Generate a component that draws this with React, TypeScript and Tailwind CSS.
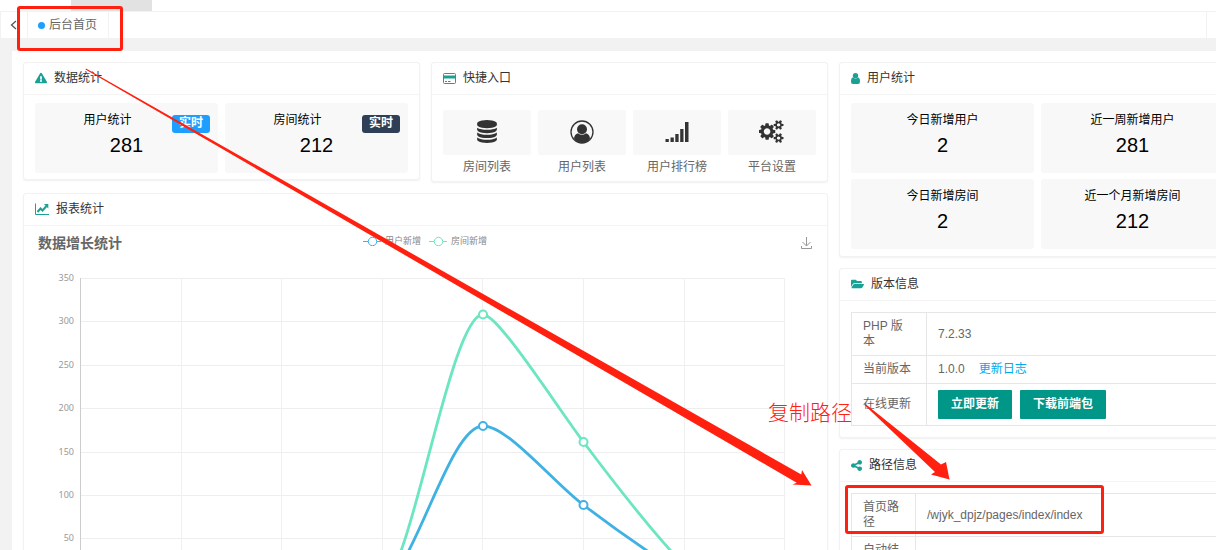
import React from 'react';
import { FaExclamationTriangle, FaFolderOpen } from 'react-icons/fa';

const RED = '#ff2010';

function LineChartIcon() {
  return (
    <svg className="w-[14px] h-3" viewBox="0 0 14 12" fill="none" stroke="currentColor">
      <path d="M0.5 0.500V11.500H14" />
      <path d="M2.500 9L5.500 5.500L7.500 7.500L11.500 3" strokeWidth="2" />
      <path d="M9 1H13.300V5.500Z" fill="currentColor" stroke="none" />
    </svg>
  );
}

function CardIcon() {
  return (
    <svg className="w-[13px] h-[11px]" viewBox="0 0 13 11" fill="none" stroke="currentColor">
      <rect x="0.500" y="0.500" width="12" height="10" rx="1" />
      <path d="M0.500 4H12.500" strokeWidth="3" />
      <path d="M2 8.500H4M5 8.500H7.500" />
    </svg>
  );
}

function UserIcon() {
  return (
    <svg className="w-[9px] h-[11px]" viewBox="0 0 9 11" fill="currentColor">
      <circle cx="4.500" cy="2.700" r="2.700" />
      <path d="M2 4.500Q4.500 6.800 7 4.500Q9 4.800 9 8.500Q9 11 7 11H2Q0 11 0 8.500Q0 4.800 2 4.500Z" />
    </svg>
  );
}

function ShareIcon() {
  return (
    <svg className="w-[11px] h-[11px]" viewBox="128 128 1536 1536" fill="currentColor">
      <path d="M1344 1024q133 0 226.500 93.500t93.500 226.500-93.500 226.500-226.500 93.500-226.500-93.500-93.500-226.500q0-12 2-34l-360-180q-92 86-218 86-133 0-226.500-93.500t-93.500-226.500 93.500-226.500 226.500-93.500q126 0 218 86l360-180q-2-22-2-34 0-133 93.500-226.500t226.500-93.500 226.500 93.500 93.500 226.500-93.500 226.500-226.500 93.500q-126 0-218-86l-360 180q2 22 2 34t-2 34l360 180q92-86 218-86z" />
    </svg>
  );
}

function DatabaseIcon() {
  return (
    <svg className="w-6 h-[23px]" viewBox="0 0 1792 1792" fill="currentColor">
      <path d="M896 768q237 0 443-43t325-127v170q0 69-103 128t-280 93.500-385 34.500-385-34.500-280-93.500-103-128v-170q119 84 325 127t443 43zm0 768q237 0 443-43t325-127v170q0 69-103 128t-280 93.500-385 34.500-385-34.500-280-93.500-103-128v-170q119 84 325 127t443 43zm0-384q237 0 443-43t325-127v170q0 69-103 128t-280 93.500-385 34.500-385-34.500-280-93.500-103-128v-170q119 84 325 127t443 43zm0-1152q208 0 385 34.500t280 93.500 103 128v128q0 69-103 128t-280 93.500-385 34.500-385-34.500-280-93.500-103-128v-128q0-69 103-128t280-93.500 385-34.500z" />
    </svg>
  );
}

function UserCircleIcon() {
  return (
    <svg className="w-6 h-6" viewBox="0 0 24 24" fill="currentColor">
      <circle cx="12" cy="12" r="11" fill="none" stroke="currentColor" strokeWidth="1.300" />
      <circle cx="12" cy="9.300" r="5" />
      <path d="M4 18.500Q4.500 14.200 8 13.300Q12 16.300 16 13.300Q19.500 14.200 20 18.500Q16.800 23 12 23T4 18.500Z" />
    </svg>
  );
}

function SignalIcon() {
  return (
    <svg className="w-6 h-6" viewBox="0 0 24 24" fill="currentColor">
      <rect x="0.500" y="19" width="3.300" height="3" />
      <rect x="5.500" y="17.500" width="3.300" height="4.500" />
      <rect x="10.300" y="14" width="3.300" height="8" />
      <rect x="15.200" y="9" width="3.300" height="13" />
      <rect x="20" y="2" width="3.500" height="20" />
    </svg>
  );
}

function CogsIcon() {
  return (
    <svg className="w-[26px] h-[23px]" viewBox="0 0 1920 1792" fill="currentColor">
      <path d="M832 896q0-106-75-181t-181-75-181 75-75 181 75 181 181 75 181-75 75-181zm768 512q0-52-38-90t-90-38-90 38-38 90q0 53 37.500 90.500t90.500 37.500 90.500-37.500 37.500-90.500zm0-1024q0-52-38-90t-90-38-90 38-38 90q0 53 37.500 90.500t90.500 37.500 90.500-37.500 37.500-90.500zm-384 421v185q0 10-7 19.500t-16 10.500l-155 24q-11 35-32 76 34 48 90 115 7 11 7 20 0 12-7 19-23 30-82.500 89.500t-78.500 59.500q-11 0-21-7l-115-90q-37 19-77 31-11 108-23 155-7 24-30 24h-186q-11 0-20-7.500t-10-17.500l-23-153q-34-10-75-31l-118 89q-7 7-20 7-11 0-21-8-144-133-144-160 0-9 7-19 10-14 41-53t47-61q-23-44-35-82l-152-24q-10-1-17-9.500t-7-19.500v-185q0-10 7-19.500t16-10.500l155-24q11-35 32-76-34-48-90-115-7-11-7-20 0-12 7-20 22-30 82-89t79-59q11 0 21 7l115 90q34-18 77-32 11-108 23-154 7-24 30-24h186q11 0 20 7.500t10 17.500l23 153q34 10 75 31l118-89q8-7 20-7 11 0 21 8 144 133 144 160 0 8-7 19-12 16-42 54t-45 60q23 48 34 82l152 23q10 2 17 10.500t7 19.500zm640 533v140q0 16-149 31-12 27-30 52 51 113 51 138 0 4-4 7-122 71-124 71-8 0-46-47t-52-68q-20 2-30 2t-30-2q-14 21-52 68t-46 47q-2 0-124-71-4-3-4-7 0-25 51-138-18-25-30-52-149-15-149-31v-140q0-16 149-31 13-29 30-52-51-113-51-138 0-4 4-7 4-2 35-20t59-34 30-16q8 0 46 46.500t52 67.500q20-2 30-2t30 2q51-71 92-112l6-2q4 0 124 70 4 3 4 7 0 25-51 138 17 23 30 52 149 15 149 31zm0-1024v140q0 16-149 31-12 27-30 52 51 113 51 138 0 4-4 7-122 71-124 71-8 0-46-47t-52-68q-20 2-30 2t-30-2q-14 21-52 68t-46 47q-2 0-124-71-4-3-4-7 0-25 51-138-18-25-30-52-149-15-149-31v-140q0-16 149-31 13-29 30-52-51-113-51-138 0-4 4-7 4-2 35-20t59-34 30-16q8 0 46 46.500t52 67.500q20-2 30-2t30 2q51-71 92-112l6-2q4 0 124 70 4 3 4 7 0 25-51 138 17 23 30 52 149 15 149 31z" />
    </svg>
  );
}

type CardProps = { icon: React.ReactNode; title: string; children: React.ReactNode };

function Card({ icon, title, children }: CardProps) {
  return (
    <section className="bg-white border border-[#f2f2f2] rounded-[3px] shadow-[0_1px_2px_rgba(0,0,0,0.06)]">
      <header className="flex items-center gap-[7px] h-8 px-[11px] pb-px border-b border-[#f4f4f4]">
        <span className="text-[#1aa094]">{icon}</span>
        <h2 className="text-[#333]">{title}</h2>
      </header>
      {children}
    </section>
  );
}

type StatProps = { label: string; value: number; badge?: 'blue' | 'dark' };

function Stat({ label, value, badge }: StatProps) {
  return (
    <div className="h-[70px] pt-[9px] bg-[#f8f8f8] rounded-[3px] text-center text-black">
      <div className="flex items-start px-2">
        <h3 className="flex-1 leading-4">{label}</h3>
        {badge && (
          <span
            className={`mt-[3px] h-[18px] px-[7px] rounded-[3px] leading-4 font-bold text-white ${
              badge === 'blue' ? 'bg-[#1e9fff]' : 'bg-[#2f4056]'
            }`}
          >
            实时
          </span>
        )}
      </div>
      <p className={`text-xl leading-6 ${badge ? '' : 'mt-[5px]'}`}>{value}</p>
    </div>
  );
}

const shortcuts = [
  { label: '房间列表', icon: <DatabaseIcon /> },
  { label: '用户列表', icon: <UserCircleIcon /> },
  { label: '用户排行榜', icon: <SignalIcon /> },
  { label: '平台设置', icon: <CogsIcon /> },
];

const yTicks = [350, 300, 250, 200, 150, 100, 50, 0];
const xTicks = [0, 1, 2, 3, 4, 5, 6, 7];

function GrowthChart() {
  return (
    <svg className="block w-full" viewBox="0 0 803 340" role="img" aria-label="数据增长统计">
      {yTicks.map((tick, i) => {
        const y = Math.round(12 + i * 43.4) + 0.5;
        return (
          <g key={tick}>
            <line x1="57" x2="761" y1={y} y2={y} stroke="#eee" />
            <text x="50" y={y + 2} textAnchor="end" fontSize="9" fill="#999" fontFamily="'Noto Sans', sans-serif">
              {tick}
            </text>
          </g>
        );
      })}
      {xTicks.map((tick) => {
        const x = Math.round(56 + tick * 100.6) + 0.5;
        return <line key={tick} x1={x} x2={x} y1="12" y2="316" stroke={tick === 0 ? '#ccc' : '#f0f0f0'} />;
      })}
      <g fill="none" stroke="#3fb1e3" strokeWidth="2.800">
        <path d="M358 315C388 315 424 160 459 160C484 160 529 216 559.500 239C589.500 262 627 288 660 309" />
        <circle cx="459" cy="160" r="4" fill="#fff" strokeWidth="2" />
        <circle cx="559.500" cy="239" r="4" fill="#fff" strokeWidth="2" />
      </g>
      <g fill="none" stroke="#6be6c1" strokeWidth="2.800">
        <path d="M358 315C386 315 426 48.500 459 48.500C474 48.500 529 135 559.500 176C589.500 216 628 266 660 299" />
        <circle cx="459" cy="48.500" r="4" fill="#fff" strokeWidth="2" />
        <circle cx="559.500" cy="176" r="4" fill="#fff" strokeWidth="2" />
      </g>
    </svg>
  );
}

function LegendItem({ label, color }: { label: string; color: string }) {
  return (
    <span className="flex items-center gap-1 text-[9px] leading-3 text-[#888]">
      <svg className="w-[18px] h-[10px]" viewBox="0 0 18 10" fill="none" stroke={color}>
        <path d="M0 5.500H5M14 5.500H18" />
        <circle cx="9.500" cy="5.500" r="4.200" />
      </svg>
      {label}
    </span>
  );
}

/* Marker boxes, arrows and the note drawn over the page */
function Annotations() {
  return (
    <div className="absolute inset-0 pointer-events-none">
      <div className="absolute left-[17px] top-[6px] w-[106px] h-[45px] border-3 border-[#ff2010] rounded-[3px]" />
      <div className="absolute left-[845px] top-[485px] w-[259px] h-[49px] border-3 border-[#ff2010] rounded-[3px]" />
      <svg className="absolute left-0 top-0 w-[1216px] h-[550px]" viewBox="0 0 1216 550" fill={RED}>
        <path d="M86 68.500L801.300 474.500L802 470L811.500 485.500L792.500 484.500L796.700 482.700L85.500 69.500Z" />
        <path d="M865.500 404L941 464.500L946 462L949.500 479.500L931 474.500L935 472L864.500 405Z" />
      </svg>
      <p className="absolute left-[768px] top-[401px] text-[21px] leading-6 font-light text-[#ff2010]">复制路径</p>
    </div>
  );
}

export default function App() {
  return (
    <div className="relative h-screen overflow-hidden bg-[#f2f2f2] text-xs font-['Liberation_Sans','Noto_Sans_CJK_SC',sans-serif]">
      {/* Top bar */}
      <div className="h-[11px] bg-white">
        <div className="ml-[71px] w-[81px] h-full bg-[#e2e2e2]" />
      </div>

      {/* Page tabs */}
      <nav className="flex h-7 bg-white border-y border-[#f2f2f2] text-[#666]">
        <button aria-label="向左" className="flex items-center justify-end w-7 pr-[9px] border-x border-[#f2f2f2]">
          <svg className="w-2 h-3" viewBox="0 0 8 12" fill="none" stroke="#555" strokeWidth="1.300">
            <path d="M6 2L1.500 6L6 10" />
          </svg>
        </button>
        <a href="#home" className="flex items-center gap-1 w-[81px] pl-[10px] border-r border-[#f2f2f2]">
          <span className="w-[7px] h-[7px] rounded-full bg-[#1e9fff]" />
          后台首页
        </a>
        <div className="ml-auto w-[10px] border-l border-[#f2f2f2]" />
      </nav>

      {/* Content runs on past the right edge of the frame */}
      <main className="grid grid-cols-3 gap-[11px] mt-3 ml-3 -mr-[31px] p-[11px] bg-white">
        <div className="col-span-2">
          <div className="grid grid-cols-2 gap-[11px] items-start">
            <Card icon={<FaExclamationTriangle className="w-3 h-3" />} title="数据统计">
              <div className="grid grid-cols-2 gap-[7px] px-[11px] pt-2 pb-1.5">
                <Stat label="用户统计" value={281} badge="blue" />
                <Stat label="房间统计" value={212} badge="dark" />
              </div>
            </Card>

            <Card icon={<CardIcon />} title="快捷入口">
              <div className="grid grid-cols-4 gap-[7px] px-[11px] pt-[15px] pb-0.5">
                {shortcuts.map((item) => (
                  <a key={item.label} href="#shortcut" className="text-center text-[#666]">
                    <span className="flex items-center justify-center h-[45px] pb-0.5 bg-[#f8f8f8] rounded-[2px] text-[#333]">
                      {item.icon}
                    </span>
                    <span className="block leading-6">{item.label}</span>
                  </a>
                ))}
              </div>
            </Card>
          </div>

          <div className="mt-[11px]">
            <Card icon={<LineChartIcon />} title="报表统计">
              <div className="grid grid-cols-[1fr_auto_1fr] items-center h-10 pl-[14px] pr-[15px] pb-1.5">
                <h3 className="text-sm font-bold text-[#666]">数据增长统计</h3>
                <div className="flex gap-2 pb-1">
                  <LegendItem label="用户新增" color="#3fb1e3" />
                  <LegendItem label="房间新增" color="#6be6c1" />
                </div>
                <button aria-label="保存为图片" className="justify-self-end">
                  <svg className="w-[11px] h-3" viewBox="0 0 11 12" fill="none" stroke="#999">
                    <path d="M0.500 9V11.500H10.500V9M5.500 0V9M1.500 5L5.500 9L9.500 5" />
                  </svg>
                </button>
              </div>
              <GrowthChart />
            </Card>
          </div>
        </div>

        <div className="flex flex-col gap-[11px]">
          <Card icon={<UserIcon />} title="用户统计">
            <div className="grid grid-cols-2 gap-x-[7px] gap-y-1.5 px-[11px] pt-2 pb-[7px]">
              <Stat label="今日新增用户" value={2} />
              <Stat label="近一周新增用户" value={281} />
              <Stat label="今日新增房间" value={2} />
              <Stat label="近一个月新增房间" value={212} />
            </div>
          </Card>

          <Card icon={<FaFolderOpen className="w-[13px] h-3" />} title="版本信息">
            <div className="px-[11px] py-[11px]">
              <table className="w-full table-fixed border-collapse text-[#666] leading-[15px] [&_td]:border [&_td]:border-[#e6e6e6] [&_td]:px-[11px] [&_td]:py-1.5">
                <tbody>
                  <tr>
                    <td className="w-[75px]">PHP 版<br />本</td>
                    <td>7.2.33</td>
                  </tr>
                  <tr>
                    <td>当前版本</td>
                    <td>
                      1.0.0
                      <a href="#changelog" className="ml-[14px] text-[#01aaed]">更新日志</a>
                    </td>
                  </tr>
                  <tr>
                    <td>在线更新</td>
                    <td>
                      <div className="flex gap-2">
                        <button className="h-[29px] px-[13px] bg-[#009688] rounded-[1px] font-bold text-white">立即更新</button>
                        <button className="h-[29px] px-[13px] bg-[#009688] rounded-[1px] font-bold text-white">下载前端包</button>
                      </div>
                    </td>
                  </tr>
                </tbody>
              </table>
            </div>
          </Card>

          <Card icon={<ShareIcon />} title="路径信息">
            <div className="px-[11px] py-[11px]">
              <table className="w-full table-fixed border-collapse text-[#666] leading-[15px] [&_td]:border [&_td]:border-[#e6e6e6] [&_td]:px-[11px] [&_td]:py-1.5">
                <tbody>
                  <tr>
                    <td className="w-16">首页路径</td>
                    <td>/wjyk_dpjz/pages/index/index</td>
                  </tr>
                  <tr>
                    <td>自动结算</td>
                    <td></td>
                  </tr>
                </tbody>
              </table>
            </div>
          </Card>
        </div>
      </main>

      <Annotations />
    </div>
  );
}
